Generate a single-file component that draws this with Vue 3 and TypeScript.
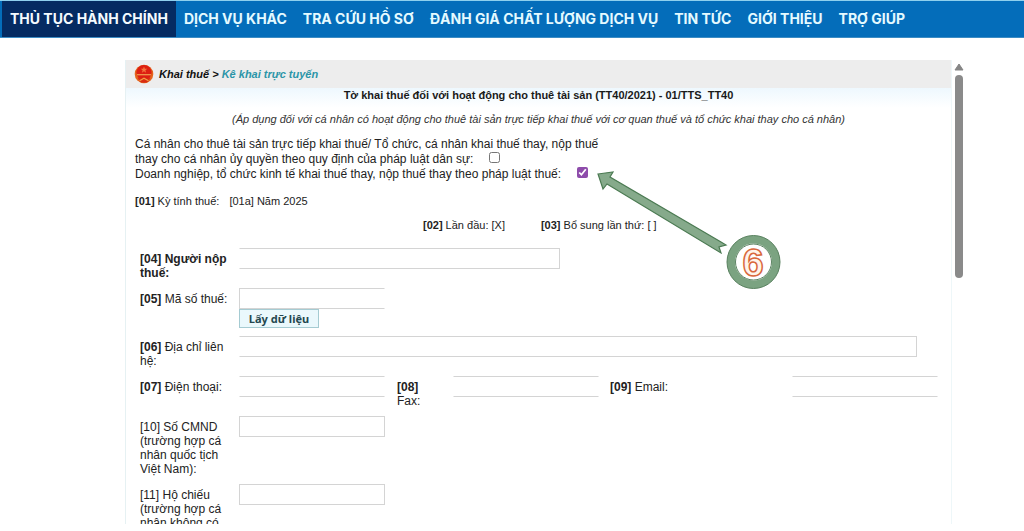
<script setup lang="ts">
import { ref } from 'vue'

interface NavItem {
  label: string
  active?: boolean
}

const navItems: NavItem[] = [
  { label: 'THỦ TỤC HÀNH CHÍNH', active: true },
  { label: 'DỊCH VỤ KHÁC' },
  { label: 'TRA CỨU HỒ SƠ' },
  { label: 'ĐÁNH GIÁ CHẤT LƯỢNG DỊCH VỤ' },
  { label: 'TIN TỨC' },
  { label: 'GIỚI THIỆU' },
  { label: 'TRỢ GIÚP' },
]

const individual = ref(false)
const enterprise = ref(true)
const taxpayer = ref('')
const taxCode = ref('')
const address = ref('')
const phone = ref('')
const fax = ref('')
const email = ref('')
const idCard = ref('')
const passport = ref('')
</script>

<template>
  <div class="page">
    <nav class="nav">
      <a
        v-for="item in navItems"
        :key="item.label"
        href="#"
        class="nav-link"
        :class="{ active: item.active }"
      >{{ item.label }}</a>
    </nav>

    <div class="frame">
      <main class="panel">
        <header class="crumbs">
          <svg class="emblem" viewBox="0 0 20 20" aria-hidden="true">
            <circle cx="10" cy="10" r="9.3" fill="#e5641c" />
            <circle cx="10" cy="8.6" r="7.6" fill="#dd1f12" />
            <path d="M10 2.6l.9 2.2h2.4l-1.9 1.5.7 2.4-2.1-1.4-2.1 1.4.7-2.4-1.9-1.5h2.4z" fill="#f4743c" />
            <path d="M3 10.700h14" stroke="#f0a050" stroke-width="1.2" fill="none" />
            <path d="M3.500 13.500q6.500 3.500 13 0l-2.200 4q-4.300 2.600-8.600 0z" fill="#d92c12" />
            <path d="M5.500 16.800l4.500-2.600 4.500 2.600" stroke="#f2a044" stroke-width="1.3" fill="none" />
          </svg>
          <span class="crumb">Khai thuế &gt; <a href="#">Kê khai trực tuyến</a></span>
        </header>

        <form class="form" @submit.prevent>
          <h1 class="title">Tờ khai thuế đối với hoạt động cho thuê tài sản (TT40/2021) - 01/TTS_TT40</h1>
          <p class="subtitle">(Áp dụng đối với cá nhân có hoạt động cho thuê tài sản trực tiếp khai thuế với cơ quan thuế và tổ chức khai thay cho cá nhân)</p>

          <div class="declarants">
            <div class="option">
              <label for="individual">Cá nhân cho thuê tài sản trực tiếp khai thuế/ Tổ chức, cá nhân khai thuế thay, nộp thuế<br>thay cho cá nhân ủy quyền theo quy định của pháp luật dân sự:</label>
              <input id="individual" v-model="individual" type="checkbox" class="check">
            </div>
            <div class="option">
              <label for="enterprise">Doanh nghiệp, tổ chức kinh tế khai thuế thay, nộp thuế thay theo pháp luật thuế:</label>
              <input id="enterprise" v-model="enterprise" type="checkbox" class="check">
            </div>
          </div>

          <p class="period"><span><b>[01]</b> Kỳ tính thuế:</span><span>[01a] Năm 2025</span></p>
          <p class="times"><span><b>[02]</b> Lần đầu: [X]</span><span><b>[03]</b> Bổ sung lần thứ: [ ]</span></p>

          <div class="rows">
            <div class="row">
              <label for="taxpayer" class="label strong">[04] Người nộp thuế:</label>
              <input id="taxpayer" v-model="taxpayer" type="text" class="field medium open-left">
            </div>
            <div class="row">
              <label for="taxcode" class="label"><b>[05]</b> Mã số thuế:</label>
              <div class="stack">
                <input id="taxcode" v-model="taxCode" type="text" class="field open-right">
                <button type="button" class="fetch">Lấy dữ liệu</button>
              </div>
            </div>
            <div class="row">
              <label for="address" class="label"><b>[06]</b> Địa chỉ liên hệ:</label>
              <input id="address" v-model="address" type="text" class="field wide open-left">
            </div>
            <div class="row">
              <label for="phone" class="label"><b>[07]</b> Điện thoại:</label>
              <input id="phone" v-model="phone" type="text" class="field open-left open-right">
              <label for="fax" class="label fax-label"><b>[08]</b> Fax:</label>
              <input id="fax" v-model="fax" type="text" class="field open-left open-right">
              <label for="email" class="label email-label"><b>[09]</b> Email:</label>
              <input id="email" v-model="email" type="text" class="field open-left open-right">
            </div>
            <div class="row tall">
              <label for="idcard" class="label">[10] Số CMND (trường hợp cá nhân quốc tịch Việt Nam):</label>
              <input id="idcard" v-model="idCard" type="text" class="field">
            </div>
            <div class="row">
              <label for="passport" class="label">[11] Hộ chiếu (trường hợp cá nhân không có</label>
              <input id="passport" v-model="passport" type="text" class="field">
            </div>
          </div>
        </form>

        <svg class="callout" viewBox="0 0 184 124" aria-hidden="true">
          <path
            d="M1 4L16 2L13 7L124 72L129 75L122 77L124 83L10 14L6 19Z"
            fill="#86aa8b"
            stroke="#4b7a52"
            stroke-width="1.2"
            stroke-linejoin="miter"
          />
          <circle cx="156.500" cy="92" r="22.500" fill="#fff" stroke="#7ba381" stroke-width="8" />
          <circle cx="156.500" cy="92" r="26.500" fill="none" stroke="#5a8260" stroke-width="1" />
          <circle cx="156.500" cy="92" r="18" fill="none" stroke="#5a8260" stroke-width="1" />
          <text x="156" y="106" class="digit">6</text>
        </svg>
      </main>

      <div class="scroll" aria-hidden="true">
        <svg class="scroll-up" viewBox="0 0 10 8"><path d="M5 1L9 7H1Z" fill="#858585" stroke="#858585" stroke-linejoin="round" /></svg>
        <div class="thumb"></div>
      </div>
    </div>
  </div>
</template>

<style>
body {
  margin: 0;
  background: #fff;
}
</style>

<style scoped>
.page {
  display: flex;
  flex-direction: column;
  height: 100vh;
  overflow: hidden;
  font-family: "Liberation Sans", Arial, sans-serif;
  font-size: 11px;
  line-height: 14px;
  color: #222;
}

.nav {
  display: flex;
  flex: none;
  height: 36px;
  padding-left: 2px;
  border-top: 1px solid #8fd0ee;
  border-bottom: 1px solid #3c8cc4;
  background: #046dba;
}

.nav-link {
  display: flex;
  align-items: center;
  padding: 0 8px;
  color: #e4faff;
  font-family: Inter, sans-serif;
  font-size: 14px;
  font-weight: 700;
  text-decoration: none;
  white-space: nowrap;
}

.nav-link.active {
  background: #052b62;
  color: #f4fbff;
}

.frame {
  display: flex;
  flex: 1;
  min-height: 0;
  margin: 22px 59px 7px 125px;
  overflow: hidden;
}

.panel {
  position: relative;
  flex: 1;
  min-width: 0;
  box-sizing: border-box;
  border-left: 1px solid #e6f1f3;
  border-right: 1px solid #eef7f9;
}

.crumbs {
  display: flex;
  align-items: center;
  gap: 5px;
  height: 28px;
  padding-left: 8px;
  background: #ededed;
}

.emblem {
  width: 20px;
  height: 20px;
}

.crumb {
  color: #111;
  font-weight: 700;
  font-style: italic;
}

.crumb a {
  color: #2b95a8;
  text-decoration: none;
}

.form {
  background: linear-gradient(#eef8fe, #fff 20px);
}

.title {
  margin: 0;
  color: #1a1a1a;
  font-size: 11px;
  line-height: 14px;
  text-align: center;
}

.subtitle {
  margin: 10px 0 0;
  color: #333;
  font-style: italic;
  text-align: center;
}

.declarants {
  margin: 11px 0 0 9px;
  font-size: 12px;
  line-height: 15px;
}

.check {
  width: 11px;
  height: 11px;
  margin: 0 0 0 16px;
  accent-color: #8e4cab;
}

.period {
  display: flex;
  gap: 10px;
  margin: 12px 0 0 9px;
}

.times {
  display: flex;
  gap: 36px;
  margin: 10px 0 0 297px;
}

.rows {
  display: flex;
  flex-direction: column;
  gap: 8px;
  margin: 16px 0 0 14px;
}

.row {
  display: flex;
  align-items: flex-start;
  min-height: 32px;
}

.row.tall {
  min-height: 60px;
}

.label {
  box-sizing: border-box;
  flex: none;
  width: 99px;
  padding: 4px 10px 0 0;
  font-size: 12px;
  line-height: 14px;
}

.tall .label {
  margin-bottom: -4px;
}

.strong {
  font-weight: 700;
}

.fax-label {
  width: 68px;
  padding: 4px 24px 0 12px;
}

.email-label {
  width: 193px;
  padding-left: 11px;
}

.field {
  box-sizing: border-box;
  flex: none;
  width: 146px;
  height: 21px;
  padding: 0 4px;
  border: 1px solid #d4d4d4;
  border-radius: 0;
  background: #fff;
  font: inherit;
}

.field.medium {
  width: 321px;
}

.field.wide {
  flex: 1;
  width: auto;
  margin-right: 34px;
}

.open-left {
  border-left-color: transparent;
}

.open-right {
  border-right-color: transparent;
}

.stack {
  display: flex;
  flex-direction: column;
  align-items: flex-start;
}

.fetch {
  box-sizing: border-box;
  width: 80px;
  height: 19px;
  padding: 0;
  border: 1px solid #a5cbd2;
  background: #eaf8fc;
  color: #24474f;
  font: 700 11px/16px "Noto Sans", sans-serif;
}

.callout {
  position: absolute;
  top: 110px;
  left: 471px;
  width: 184px;
  height: 124px;
  pointer-events: none;
}

.digit {
  font-family: "Liberation Sans", Arial, sans-serif;
  font-size: 38px;
  font-weight: 700;
  text-anchor: middle;
  fill: #fff4ea;
  stroke: #d9683c;
  stroke-width: 1.5;
}

.scroll {
  display: flex;
  flex: none;
  flex-direction: column;
  align-items: center;
  gap: 4px;
  width: 13px;
  padding-top: 3px;
}

.scroll-up {
  width: 10px;
  height: 8px;
}

.thumb {
  width: 8px;
  height: 44%;
  border-radius: 4px;
  background: #8a8a8a;
}
</style>
